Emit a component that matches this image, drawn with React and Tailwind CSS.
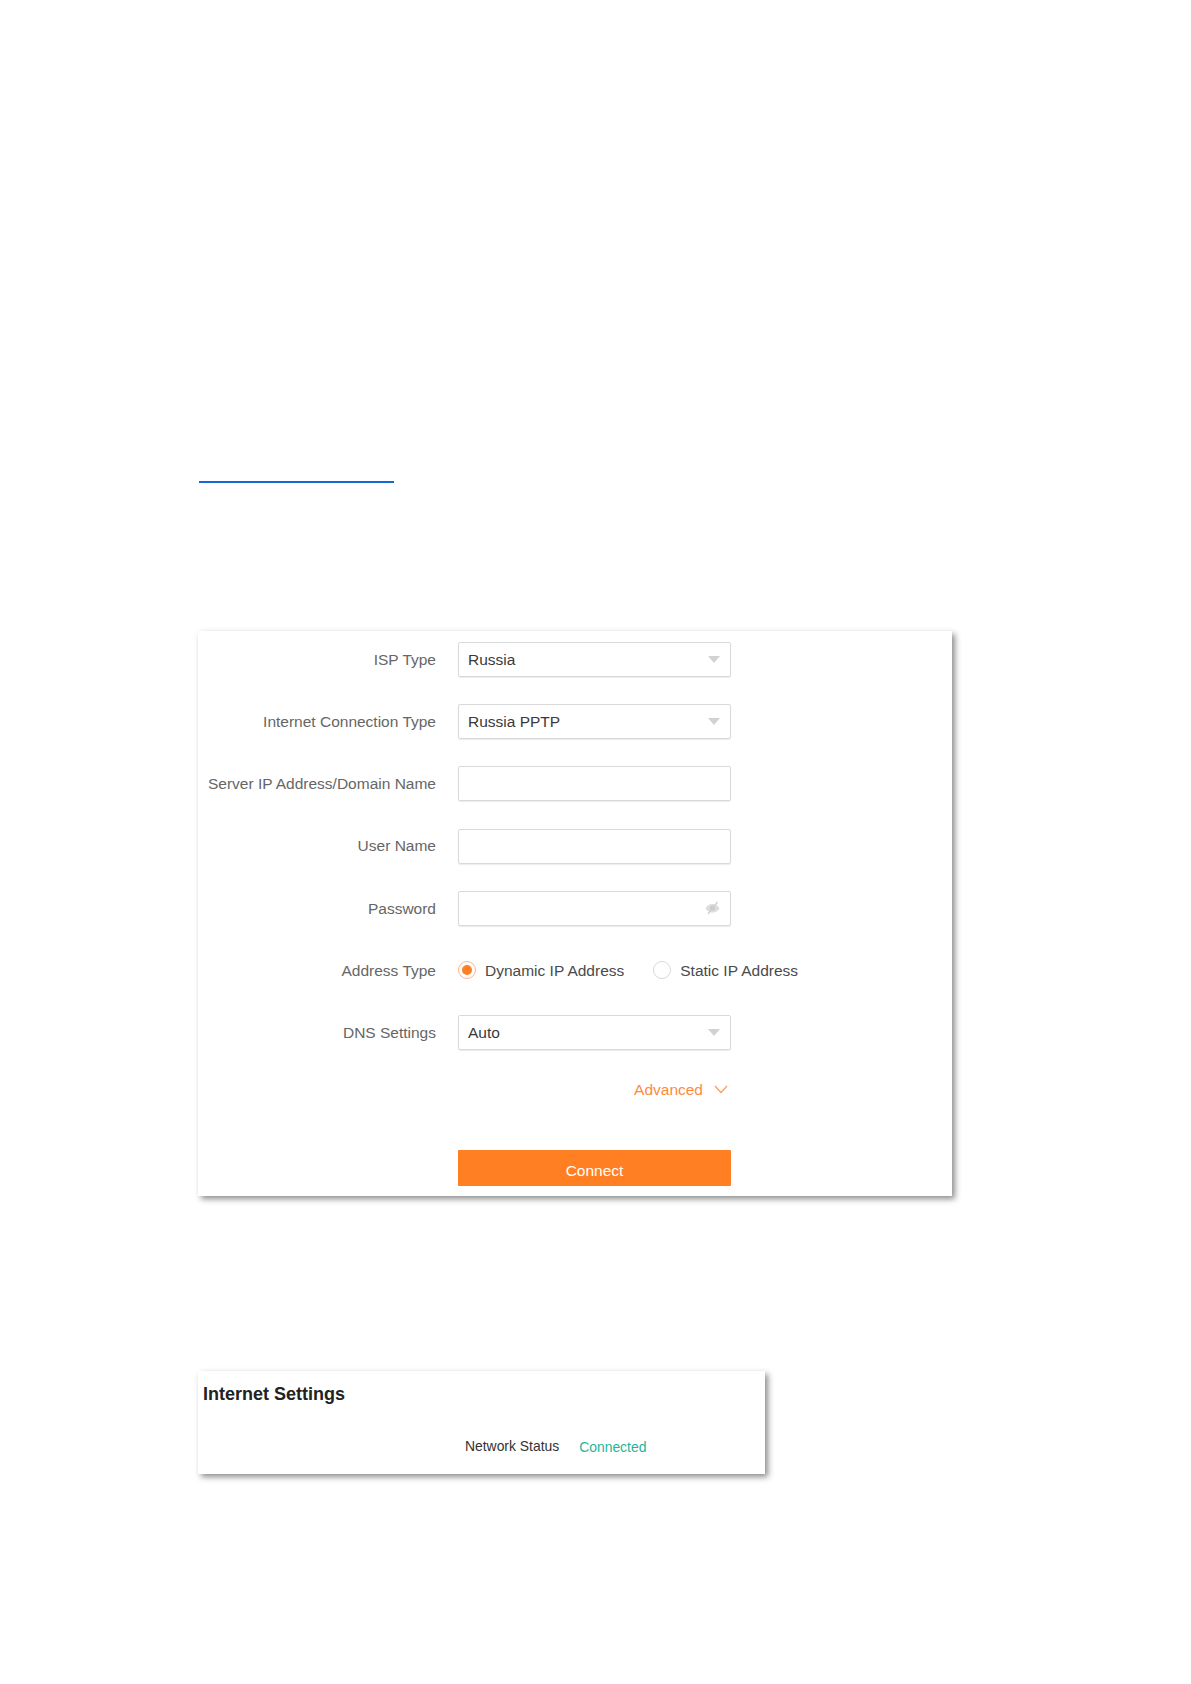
const cardShadow = "shadow-[3px_3px_6px_rgba(0,0,0,0.45)]";

const Arrow = () => (
  <svg width="12" height="7" viewBox="0 0 12 7" className="shrink-0">
    <polygon points="0,0 12,0 6,7" fill="#d2d2d2" />
  </svg>
);

const EyeOff = () => (
  <svg width="15" height="14" viewBox="0 0 15 14" className="shrink-0">
    <path d="M0.5 7.5C3 3.5 5.5 3 7.5 3s4.5 .5 7 4.5C12 11 9.5 11.5 7.5 11.5S3 11 .5 7.5Z" fill="#dcdcdc" />
    <circle cx="7.5" cy="7.2" r="2.4" fill="#c8c8c8" />
    <path d="M3 13 12.5 1" stroke="#d0d0d0" strokeWidth="1.3" fill="none" />
  </svg>
);

const Field = ({ label, children }) => (
  <div className="flex h-[35px] items-center">
    <div className="w-[238px] shrink-0 text-right text-[15.5px] text-[#666666]">{label}</div>
    <div className="ml-[22px] flex items-center">{children}</div>
  </div>
);

const Box = ({ children }) => (
  <div className="flex h-[35px] w-[273px] items-center justify-between rounded-[2px] border border-[#d9d9d9] pl-[9px] pr-[10px] text-[15.5px] text-[#3a3a3a] shadow-[0_1px_1px_rgba(0,0,0,0.08)]">
    {children}
  </div>
);

const Radio = ({ checked, label }) => (
  <div className="flex items-center">
    <span
      className={
        checked
          ? "flex h-[18px] w-[18px] items-center justify-center rounded-full border border-[#ffb48a]"
          : "flex h-[18px] w-[18px] items-center justify-center rounded-full border border-[#d9d9d9]"
      }
    >
      {checked && <span className="h-[10px] w-[10px] rounded-full bg-[#ff7f22]" />}
    </span>
    <span className="ml-[9px] text-[15.5px] text-[#4a4a4a]">{label}</span>
  </div>
);

export default function App() {
  return (
    <div
      className="min-h-[1684px] bg-white pl-[198px] pt-[481px]"
      style={{ fontFamily: '"Liberation Sans", Arial, sans-serif' }}
    >
      <div className="ml-[1px] h-[2px] w-[195px] bg-[#1368d6]" />

      <div className={`mt-[148px] h-[565px] w-[754px] bg-white pt-[11px] ${cardShadow}`}>
        <div className="flex flex-col gap-[27.2px]">
          <Field label="ISP Type">
            <Box>
              <span>Russia</span>
              <Arrow />
            </Box>
          </Field>
          <Field label="Internet Connection Type">
            <Box>
              <span>Russia PPTP</span>
              <Arrow />
            </Box>
          </Field>
          <Field label="Server IP Address/Domain Name">
            <Box />
          </Field>
          <Field label="User Name">
            <Box />
          </Field>
          <Field label="Password">
            <Box>
              <span />
              <EyeOff />
            </Box>
          </Field>
          <Field label="Address Type">
            <div className="flex items-center gap-[29px]">
              <Radio checked label="Dynamic IP Address" />
              <Radio label="Static IP Address" />
            </div>
          </Field>
          <Field label="DNS Settings">
            <Box>
              <span>Auto</span>
              <Arrow />
            </Box>
          </Field>
        </div>

        <div className="ml-[260px] mt-[29px] flex h-[20px] w-[273px] items-center justify-end pr-[3px] text-[15.5px] text-[#ff8a3d]">
          <span>Advanced</span>
          <svg width="14" height="9" viewBox="0 0 14 9" className="ml-[11px]">
            <path d="M1 1l6 6.5L13 1" stroke="#ff9a5c" strokeWidth="1.2" fill="none" />
          </svg>
        </div>

        <button className="ml-[260px] mt-[51px] flex h-[36px] w-[273px] items-center justify-center rounded-[1px] bg-[#ff7f22] pt-[5px] text-[15.5px] text-white">
          Connect
        </button>
      </div>

      <div className={`mt-[175px] h-[103px] w-[567px] bg-white pl-[5px] pt-[13px] ${cardShadow}`}>
        <div className="text-[18px] font-bold leading-[21px] text-[#222222]">Internet Settings</div>
        <div className="ml-[262px] mt-[31px] flex items-center text-[13.9px]">
          <span className="text-[#333333]">Network Status</span>
          <span className="ml-[20px] translate-y-[1px] text-[#1fb59b]">Connected</span>
        </div>
      </div>
    </div>
  );
}
